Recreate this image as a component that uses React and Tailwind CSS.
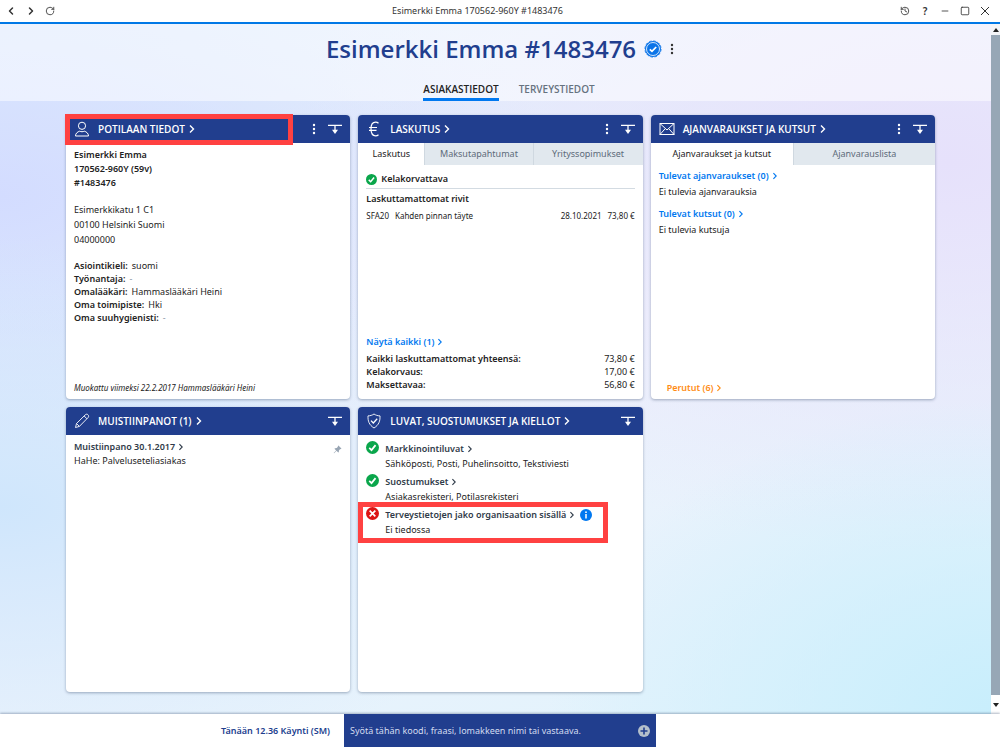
import React from 'react';
import { ChevronLeft, ChevronRight, RotateCw, History, Minus, Square } from 'lucide-react';

const Arrow = ({ className = 'w-2 h-2' }) => (
  <svg viewBox="0 0 8 8" className={`${className} shrink-0`} fill="none" stroke="currentColor" strokeWidth="1.1">
    <path d="M2.4 1.200 5.200 4 2.4 6.800" />
  </svg>
);

const Dots = ({ className }) => (
  <svg viewBox="0 0 4 12" className={className} fill="currentColor">
    <circle cx="2" cy="2" r="1.2" />
    <circle cx="2" cy="6" r="1.2" />
    <circle cx="2" cy="10" r="1.2" />
  </svg>
);

const Collapse = () => (
  <svg viewBox="0 0 14 12" className="w-[14px] h-3" fill="none" stroke="currentColor" strokeWidth="1.3">
    <path d="M0 2.4h14M7 2.4V8" />
    <path d="M4 6.800h6L7 11z" fill="currentColor" stroke="none" />
  </svg>
);

const StatusIcon = ({ ok = true, className = 'w-3 h-3' }) => (
  <svg viewBox="0 0 12 12" className={`${className} shrink-0`} fill="none" stroke="white" strokeWidth="1.6">
    <circle cx="6" cy="6" r="6" fill={ok ? '#0aa64b' : '#dc1414'} stroke="none" />
    {ok ? <path d="M3 6.4 5.1 8.4 8.8 3.8" /> : <path d="M3.4 3.4l5.2 5.2M8.6 3.4 3.4 8.6" />}
  </svg>
);

const VerifiedIcon = () => (
  <svg viewBox="0 0 18 18" className="w-[18px] h-[18px]">
    <circle cx="9" cy="9" r="8" fill="#0b74e8" />
    <circle cx="9" cy="9" r="8.100" fill="none" stroke="#0b74e8" strokeWidth="0.800" strokeDasharray="2.600 1.640" />
    <circle cx="9" cy="9" r="6.500" fill="none" stroke="white" strokeWidth="0.800" />
    <path d="M5.800 9.300 8 11.400 12.200 7" fill="none" stroke="white" strokeWidth="1.700" />
  </svg>
);

const PersonIcon = () => (
  <svg viewBox="0 0 16 16" className="w-4 h-4" fill="none" stroke="currentColor" strokeWidth="1">
    <circle cx="8" cy="4.800" r="3.600" />
    <path d="M1.500 15c0-2.600 2-4.200 4.200-4.800 1.400.7 3.200.7 4.600 0 2.200.6 4.200 2.200 4.200 4.800z" />
  </svg>
);

const EuroIcon = () => (
  <svg viewBox="0 0 16 16" className="w-4 h-4" fill="none" stroke="currentColor" strokeWidth="1.200">
    <path d="M12.500 2.300C11.600 1.500 10.700 1.200 9.600 1.200 6.600 1.200 5 4.200 5 8s1.600 6.800 4.600 6.800c1.100 0 2-.3 2.900-1.100M3 6.500h8M3 9.300h7.500" />
  </svg>
);

const MailIcon = () => (
  <svg viewBox="0 0 16 16" className="w-4 h-4" fill="none" stroke="currentColor" strokeWidth="1">
    <rect x="1" y="2.500" width="14" height="11" />
    <path d="M1 2.500l7 6.500 7-6.500M1 13.500l5-5.600M15 13.500l-5-5.600" />
  </svg>
);

const PencilIcon = () => (
  <svg viewBox="0 0 16 16" className="w-4 h-4" fill="none" stroke="currentColor" strokeWidth="0.900">
    <path d="M1.500 14.500l1-4L11.300 1.800c.9-.9 2.100-.7 2.700 0 .8.7.9 1.900 0 2.800L5.400 13.400zM2.500 10.500l2.900 2.900M10.200 3l2.700 2.800" />
  </svg>
);

const ShieldIcon = () => (
  <svg viewBox="0 0 16 16" className="w-4 h-4" fill="none" stroke="currentColor" strokeWidth="0.900">
    <path d="M8 1c1.700 1.200 3.700 1.800 6 1.900.2 5.100-1 9-6 12.100C3 11.900 1.800 8 2 2.900 4.300 2.800 6.300 2.200 8 1z" />
    <path d="M5 7.600 7.300 10 11.200 5.800" strokeWidth="1.300" />
  </svg>
);

const InfoIcon = () => (
  <svg viewBox="0 0 12 12" className="w-3 h-3">
    <circle cx="6" cy="6" r="6" fill="#0078f0" />
    <circle cx="6" cy="3.200" r="0.900" fill="white" />
    <path d="M6 5v4.500" stroke="white" strokeWidth="1.500" />
  </svg>
);

const PinIcon = () => (
  <svg viewBox="0 0 10 10" className="w-[9px] h-[9px] mt-[5px]" fill="#98a5b3">
    <path d="M6 .6 9.400 4 8.600 4.600 8 4.500 6.600 6 6.500 7.800 5.800 8.400 4 6.500 1.200 9.300.7 8.800 3.500 6 1.600 4.200 2.300 3.500 4.100 3.400 5.500 2 5.300 1.300z" />
  </svg>
);

const Card = ({ icon, title, menu, highlight, tabs, children }) => (
  <section className="relative aspect-square flex flex-col bg-white rounded-[4px] shadow-[0_1px_3px_rgba(60,80,110,0.45)]">
    <header className="h-7 shrink-0 flex items-center bg-[#213e8e] text-white rounded-t-[4px] px-2">
      <button className="flex items-center font-['Open_Sans',sans-serif] text-[10px] font-semibold">
        {icon}
        <span className="ml-2">{title}</span>
        <Arrow className="w-[10px] h-[10px] ml-[2px]" />
      </button>
      <div className="ml-auto flex items-center gap-3">
        {menu && <button aria-label="Valikko"><Dots className="w-1 h-3" /></button>}
        <button aria-label="Pienennä"><Collapse /></button>
      </div>
    </header>
    {highlight && <div className="absolute -left-px -top-px w-[228px] h-[31px] border-[5px] border-[#ff4141] pointer-events-none" />}
    {tabs}
    {children}
  </section>
);

const Tab = ({ active, children }) => (
  <button
    className={`h-[22px] border-l first:border-l-0 border-[#cfd8e0] ${
      active ? 'bg-white text-[#222]' : 'bg-[#e1e8ee] text-[#5d6b7a]'
    }`}
  >
    {children}
  </button>
);

const LinkRow = ({ className = '', children }) => (
  <a href="#" className={`flex w-fit items-center gap-[2px] font-semibold ${className}`}>
    {children}
    <Arrow />
  </a>
);

const details = [
  ['Asiointikieli:', 'suomi'],
  ['Työnantaja:', '-'],
  ['Omalääkäri:', 'Hammaslääkäri Heini'],
  ['Oma toimipiste:', 'Hki'],
  ['Oma suuhygienisti:', '-'],
];

const totals = [
  ['Kaikki laskuttamattomat yhteensä:', '73,80 €'],
  ['Kelakorvaus:', '17,00 €'],
  ['Maksettavaa:', '56,80 €'],
];

const permissions = [
  { title: 'Markkinointiluvat', text: 'Sähköposti, Posti, Puhelinsoitto, Tekstiviesti', ok: true },
  { title: 'Suostumukset', text: 'Asiakasrekisteri, Potilasrekisteri', ok: true },
  { title: 'Terveystietojen jako organisaation sisällä', text: 'Ei tiedossa', ok: false },
];

const TitleBar = () => (
  <div className="h-6 shrink-0 flex items-center justify-between bg-white border-b-2 border-[#0078e6] pl-[5px] pr-[10px] text-[#333]">
    <div className="flex items-center gap-2">
      <button aria-label="Takaisin"><ChevronLeft className="w-3 h-3" strokeWidth={3} /></button>
      <button aria-label="Eteenpäin"><ChevronRight className="w-3 h-3" strokeWidth={3} /></button>
      <button aria-label="Päivitä"><RotateCw className="w-[10px] h-[10px]" /></button>
    </div>
    <span className="leading-4">Esimerkki Emma 170562-960Y #1483476</span>
    <div className="flex items-center gap-[10px]">
      <button aria-label="Historia"><History className="w-[10px] h-[10px]" /></button>
      <button className="w-[10px] text-[10px] leading-4 font-semibold">?</button>
      <button aria-label="Pienennä ikkuna"><Minus className="w-[10px] h-[10px]" /></button>
      <button aria-label="Suurenna ikkuna">
        <Square className="w-[10px] h-[10px]" />
      </button>
      <button aria-label="Sulje">
        <svg viewBox="0 0 10 10" className="w-[10px] h-[10px]" fill="none" stroke="currentColor" strokeWidth="1">
          <path d="M1 1l8 8M9 1 1 9" />
        </svg>
      </button>
    </div>
  </div>
);

const Scrollbar = () => (
  <div className="w-[9px] shrink-0 flex flex-col bg-[#97a7b6]">
    <button aria-label="Vieritä ylös" className="h-[11px] bg-[#f4f5f8] flex items-center justify-center">
      <svg viewBox="0 0 6 4" className="w-[6px] h-1"><path d="M0 4 3 0l3 4z" fill="#222" /></svg>
    </button>
    <button aria-label="Vieritä alas" className="mt-auto h-[19px] bg-white flex items-center justify-center">
      <svg viewBox="0 0 6 4" className="w-[6px] h-1"><path d="M0 0l3 4 3-4z" fill="#222" /></svg>
    </button>
  </div>
);

export default function App() {
  return (
    <div className="min-h-screen flex flex-col font-['Noto_Sans','Open_Sans',sans-serif] text-[9px] text-[#222] bg-white">
      <TitleBar />

      <div className="flex-1 flex bg-[radial-gradient(ellipse_at_100%_100%,#c8eefc_0%,transparent_32%),radial-gradient(ellipse_at_0%_70%,#cfe6fc_0%,transparent_40%),radial-gradient(ellipse_at_95%_20%,#e6e1fb_0%,transparent_50%),radial-gradient(ellipse_at_0%_25%,#d3dcff_0%,transparent_40%),linear-gradient(160deg,#dcecfc,#eef2fc_50%,#e0f3fc)]">
        <main className="flex-1 min-w-0 pb-[22px]">
          <div className="h-[77px] pl-[9px] bg-white/50 flex flex-col items-center">
            <div className="mt-[3px] flex items-center">
              <h1 className="font-['Open_Sans',sans-serif] text-[24px] leading-[44px] font-semibold text-[#213e8e]">
                Esimerkki Emma #1483476
              </h1>
              <span className="ml-2"><VerifiedIcon /></span>
              <button aria-label="Lisää" className="ml-2 text-[#333]"><Dots className="w-1 h-3" /></button>
            </div>
            <nav className="mt-auto ml-[18px] flex gap-5 font-['Open_Sans',sans-serif] text-[10px] font-semibold">
              <button className="h-[18px] pb-1 border-b-[3px] border-[#0078f0] leading-3">ASIAKASTIEDOT</button>
              <button className="h-[18px] pb-1 border-b-[3px] border-transparent leading-3 text-[#66727f]">TERVEYSTIEDOT</button>
            </nav>
          </div>

          <div className="pt-[14px] pl-[66px] pr-14 grid grid-cols-3 gap-2">
            {/* Patient */}
            <Card icon={<PersonIcon />} title="POTILAAN TIEDOT" menu highlight>
              <div className="flex-1 flex flex-col px-2 py-[5px]">
                <div className="font-semibold leading-[14px]">
                  <p>Esimerkki Emma</p>
                  <p>170562-960Y (59v)</p>
                  <p>#1483476</p>
                </div>
                <div className="mt-3 leading-[15px]">
                  <p>Esimerkkikatu 1 C1</p>
                  <p>00100 Helsinki Suomi</p>
                  <p>04000000</p>
                </div>
                <dl className="mt-3 leading-[13px]">
                  {details.map(([label, value]) => (
                    <div key={label} className="flex gap-1">
                      <dt className="font-semibold">{label}</dt>
                      <dd className={value === '-' ? 'text-[#8a97a5]' : ''}>{value}</dd>
                    </div>
                  ))}
                </dl>
                <p className="mt-auto text-[8px] leading-3 italic">Muokattu viimeksi 22.2.2017 Hammaslääkäri Heini</p>
              </div>
            </Card>

            {/* Billing */}
            <Card
              icon={<EuroIcon />}
              title="LASKUTUS"
              menu
              tabs={
                <div className="grid grid-cols-[66fr_108fr_110fr]">
                  <Tab active>Laskutus</Tab>
                  <Tab>Maksutapahtumat</Tab>
                  <Tab>Yrityssopimukset</Tab>
                </div>
              }
            >
              <div className="flex-1 flex flex-col px-2 pt-[5px] pb-2">
                <div className="h-[19px] flex items-center gap-1 border-b border-[#d3dbe2] font-semibold">
                  <StatusIcon className="w-[11px] h-[11px]" />
                  Kelakorvattava
                </div>
                <p className="mt-[3px] font-semibold leading-[14px]">Laskuttamattomat rivit</p>
                <div className="mt-1 flex text-[8px] leading-3">
                  <span>SFA20</span>
                  <span className="ml-[6px]">Kahden pinnan täyte</span>
                  <span className="ml-auto">28.10.2021</span>
                  <span className="ml-[6px]">73,80 €</span>
                </div>
                <LinkRow className="mt-auto text-[#0078f0] leading-[14px]">Näytä kaikki (1)</LinkRow>
                <dl className="mt-[3px] leading-[13px]">
                  {totals.map(([label, value]) => (
                    <div key={label} className="flex justify-between">
                      <dt className="font-semibold">{label}</dt>
                      <dd>{value}</dd>
                    </div>
                  ))}
                </dl>
              </div>
            </Card>

            {/* Appointments */}
            <Card
              icon={<MailIcon />}
              title="AJANVARAUKSET JA KUTSUT"
              menu
              tabs={
                <div className="grid grid-cols-2">
                  <Tab active>Ajanvaraukset ja kutsut</Tab>
                  <Tab>Ajanvarauslista</Tab>
                </div>
              }
            >
              <div className="flex-1 flex flex-col px-2 pt-1 pb-1">
                <LinkRow className="text-[#0078f0] leading-[14px]">Tulevat ajanvaraukset (0)</LinkRow>
                <p className="leading-[18px]">Ei tulevia ajanvarauksia</p>
                <LinkRow className="mt-[6px] text-[#0078f0] leading-[14px]">Tulevat kutsut (0)</LinkRow>
                <p className="leading-[18px]">Ei tulevia kutsuja</p>
                <LinkRow className="mt-auto ml-2 text-[#ff8c14] leading-[14px]">Perutut (6)</LinkRow>
              </div>
            </Card>

            {/* Notes */}
            <Card icon={<PencilIcon />} title="MUISTIINPANOT (1)">
              <div className="flex justify-between px-2 py-[5px] leading-[14px]">
                <div>
                  <LinkRow className="text-[#2f3b49]">Muistiinpano 30.1.2017</LinkRow>
                  <p>HaHe: Palveluseteliasiakas</p>
                </div>
                <PinIcon />
              </div>
            </Card>

            {/* Permissions */}
            <Card icon={<ShieldIcon />} title="LUVAT, SUOSTUMUKSET JA KIELLOT">
              <ul className="px-2 py-[6px]">
                {permissions.map(({ title, text, ok }) => (
                  <li key={title} className="relative flex gap-[6px] mb-[3px]">
                    <StatusIcon ok={ok} className="w-[13px] h-[13px]" />
                    <div>
                      <div className="flex items-center gap-1">
                        <LinkRow className="leading-[15px] text-[#2f3b49]">{title}</LinkRow>
                        {!ok && <button aria-label="Lisätietoja"><InfoIcon /></button>}
                      </div>
                      <p className="leading-[15px]">{text}</p>
                    </div>
                    {!ok && (
                      <div className="absolute -left-2 -top-[5px] w-[250px] h-[41px] border-[5px] border-[#ff4141] pointer-events-none" />
                    )}
                  </li>
                ))}
              </ul>
            </Card>
          </div>
        </main>
        <Scrollbar />
      </div>

      <footer className="relative h-[33px] shrink-0 grid grid-cols-[1fr_312px_1fr] bg-white shadow-[0_-1px_2px_rgba(60,80,110,0.4)]">
        <p className="self-center justify-self-end pr-[14px] font-semibold text-[#213e8e]">Tänään 12.36 Käynti (SM)</p>
        <div className="flex items-center bg-[#213e8e] px-[6px]">
          <input
            aria-label="Syötä koodi"
            placeholder="Syötä tähän koodi, fraasi, lomakkeen nimi tai vastaava."
            className="flex-1 min-w-0 bg-transparent outline-none text-white placeholder:text-[#d3dcf0]"
          />
          <button aria-label="Lisää rivi">
            <svg viewBox="0 0 12 12" className="w-3 h-3">
              <circle cx="6" cy="6" r="6" fill="#b4bfcb" />
              <path d="M6 2.500v7M2.500 6h7" stroke="#213e8e" strokeWidth="1.600" />
            </svg>
          </button>
        </div>
      </footer>
    </div>
  );
}
